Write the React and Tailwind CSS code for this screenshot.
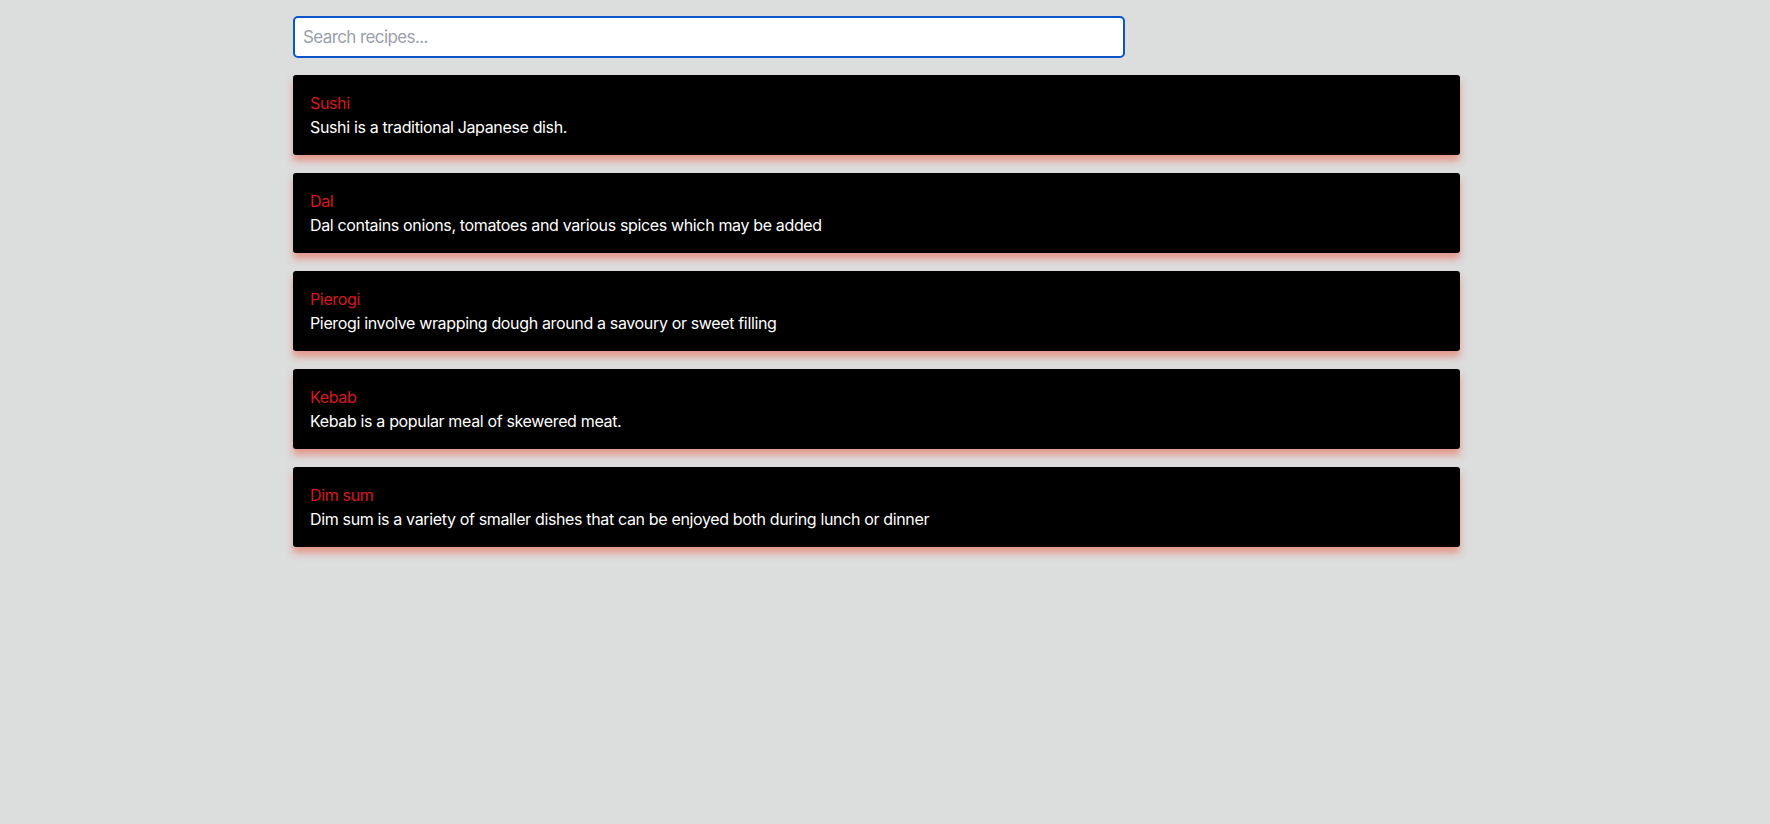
import React, { useState } from 'react';

const recipes = [
  { id: 1, name: 'Sushi', description: 'Sushi is a traditional Japanese dish.' },
  { id: 2, name: 'Dal', description: 'Dal contains onions, tomatoes and various spices which may be added' },
  { id: 3, name: 'Pierogi', description: 'Pierogi involve wrapping dough around a savoury or sweet filling' },
  { id: 4, name: 'Kebab', description: 'Kebab is a popular meal of skewered meat.' },
  { id: 5, name: 'Dim sum', description: 'Dim sum is a variety of smaller dishes that can be enjoyed both during lunch or dinner' },
];

const App = () => {
  const [query, setQuery] = useState('');

  const filtered = recipes.filter(recipe =>
    recipe.name.toLowerCase().includes(query.toLowerCase())
  );

  return (
    <div className="min-h-screen bg-[#dcdddd] font-['Inter',sans-serif] pt-4">
      <div className="ml-[293px] w-[1167px]">
        <input
          type="text"
          value={query}
          onChange={(e) => setQuery(e.target.value)}
          placeholder="Search recipes..."
          autoFocus
          className="block w-[832px] h-[42px] px-2 bg-white border-2 border-[#0b55c8] rounded-[5px] text-[17px] tracking-[-0.6px] text-black placeholder:text-[#9aa0ab] outline-none"
        />

        <ul className="mt-[17px] flex flex-col gap-[18px]">
          {filtered.map(recipe => (
            <li
              key={recipe.id}
              className="h-[80px] bg-black rounded-[3px] px-[17px] py-4 shadow-[0_6px_7px_rgba(228,140,124,0.85)] text-[16px] leading-6 tracking-[-0.35px]"
            >
              <div className="text-[#d8161e]">{recipe.name}</div>
              <div className="text-white">{recipe.description}</div>
            </li>
          ))}
        </ul>
      </div>
    </div>
  );
};

export default App;
